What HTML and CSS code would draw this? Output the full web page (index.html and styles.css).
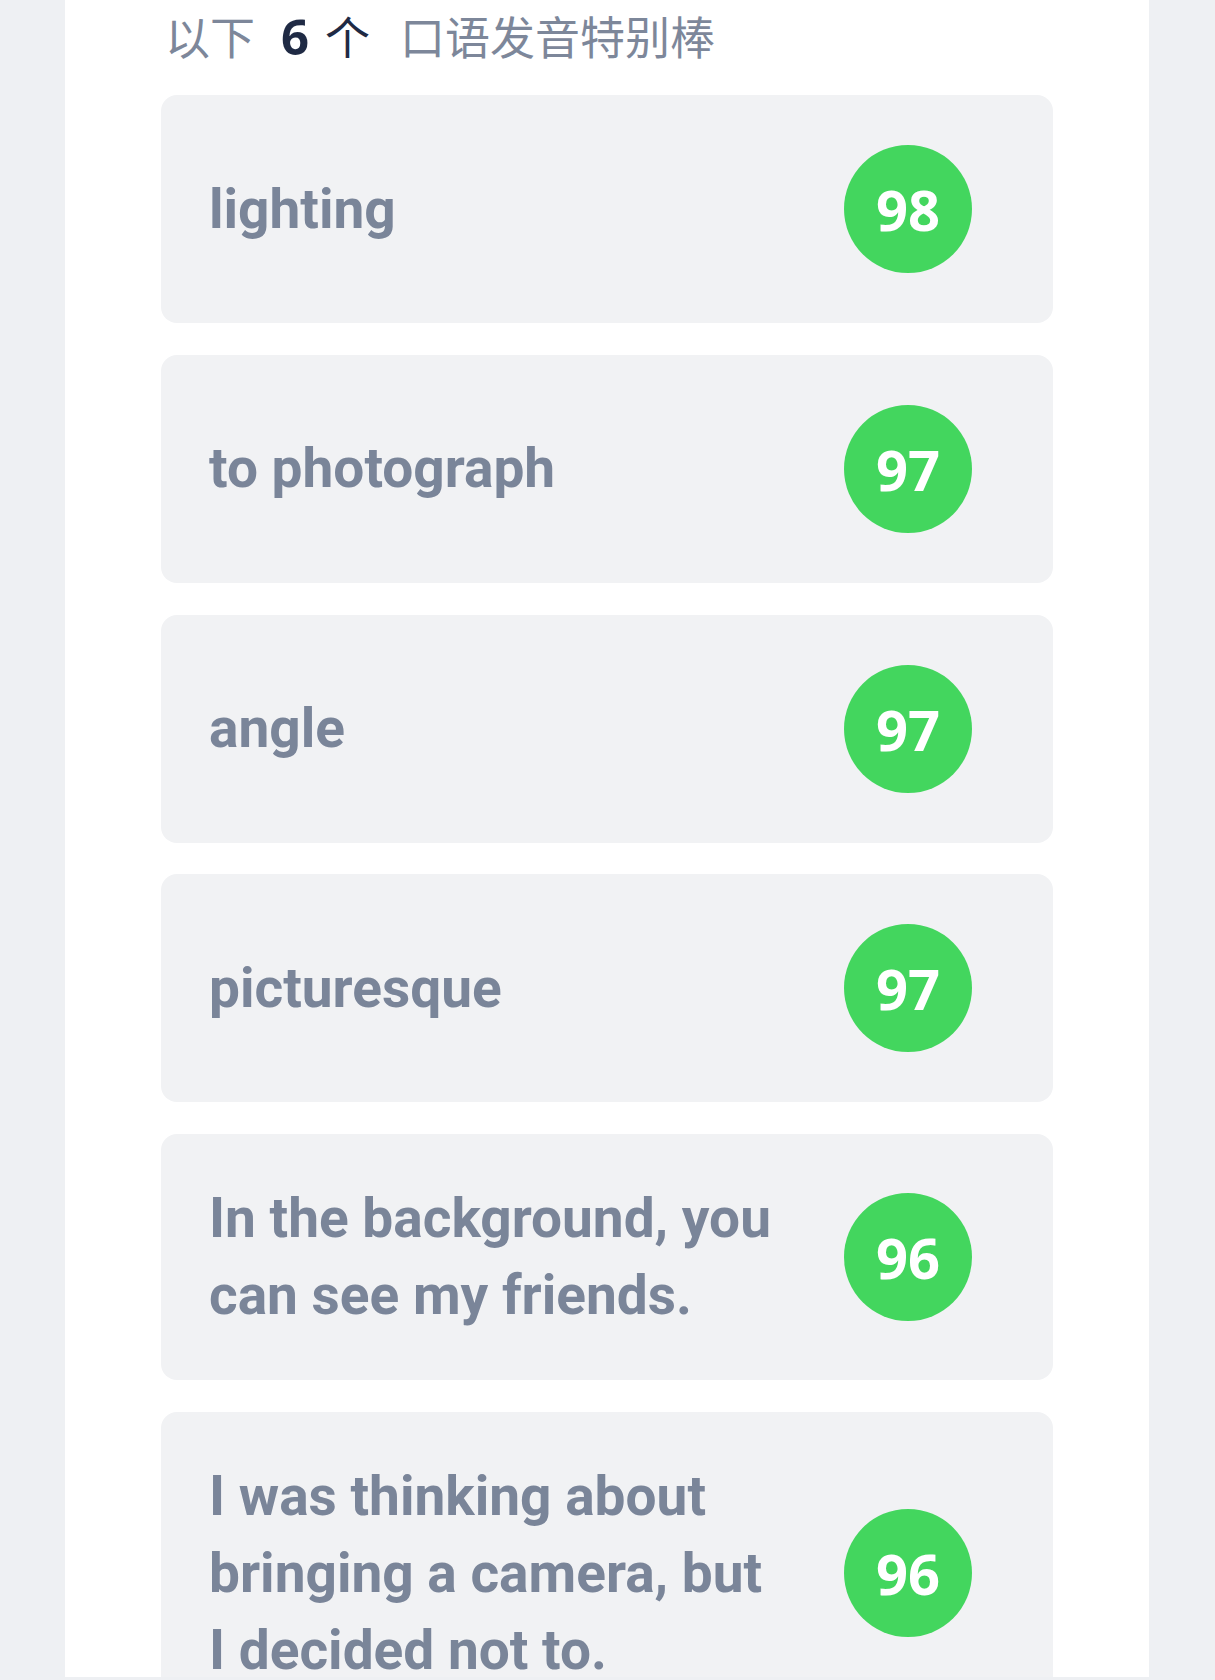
FILE: index.html
```html
<!DOCTYPE html>
<html lang="zh">
<head>
<meta charset="utf-8">
<link rel="stylesheet" href="styles.css">
</head>
<body>
<div class="page">
  <div class="panel">
    <h2 class="heading">以下<span class="hl"><b class="num">6</b>个</span>口语发音特别棒</h2>
    <ul class="list">
      <li class="card"><span class="phrase">lighting</span><span class="score">98</span></li>
      <li class="card"><span class="phrase">to photograph</span><span class="score">97</span></li>
      <li class="card"><span class="phrase">angle</span><span class="score">97</span></li>
      <li class="card"><span class="phrase">picturesque</span><span class="score">97</span></li>
      <li class="card"><span class="phrase">In the background, you can see my friends.</span><span class="score">96</span></li>
      <li class="card"><span class="phrase">I was thinking about bringing a camera, but I decided not to.</span><span class="score">96</span></li>
    </ul>
  </div>
</div>
</body>
</html>
```

FILE: styles.css
```css
html, body {
  margin: 0;
  padding: 0;
  background: #eef0f3;
}
.page {
  height: 1677px;
  overflow: hidden;
}
.panel {
  margin-left: 65px;
  width: 1084px;
  min-height: 1677px;
  background: #ffffff;
  box-sizing: border-box;
  padding: 0 96px;
}
.heading {
  margin: 0;
  padding-top: 4px;
  padding-left: 4px;
  height: 95px;
  box-sizing: border-box;
  font-family: "Noto Sans CJK SC", "Noto Sans", sans-serif;
  font-weight: 400;
  font-size: 45px;
  line-height: 64px;
  color: #7d879a;
}
.hl {
  color: #1f2a44;
  margin: 0 30px 0 26px;
}
.num {
  font-family: "Open Sans", "Noto Sans", sans-serif;
  font-weight: 700;
  font-size: 49px;
  margin-right: 16px;
}
.list {
  list-style: none;
  margin: 0;
  padding: 0;
  display: flex;
  flex-direction: column;
  gap: 31.75px;
}
.card {
  display: flex;
  align-items: center;
  gap: 56px;
  min-height: 228px;
  box-sizing: border-box;
  background: #f1f2f4;
  border-radius: 16px;
  padding: 46px 81px 46px 48px;
}
.phrase {
  flex: 1;
  font-family: Roboto, "Liberation Sans", sans-serif;
  font-weight: 700;
  font-size: 55px;
  line-height: 77px;
  color: #7a8599;
}
.score {
  flex: none;
  width: 128px;
  height: 128px;
  border-radius: 50%;
  background: #43d65e;
  color: #ffffff;
  display: flex;
  align-items: center;
  justify-content: center;
  font-family: "Open Sans", "Noto Sans", sans-serif;
  font-weight: 700;
  font-size: 56px;
}
```
